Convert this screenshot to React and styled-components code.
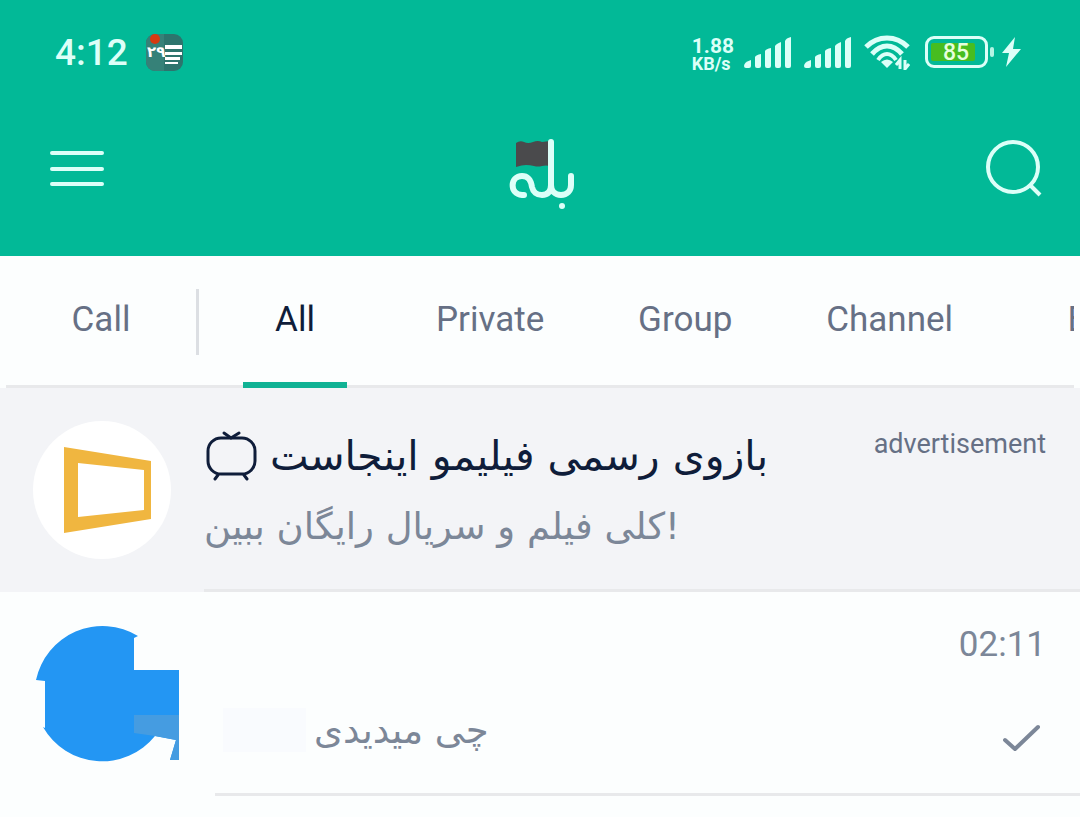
import React from 'react';
import styled, { createGlobalStyle } from 'styled-components';

const GlobalStyle = createGlobalStyle`
    * {
        box-sizing: border-box;
    }

    body {
        margin: 0;
        background: #fcfefe;
        font-family: Roboto, "DejaVu Sans", sans-serif;
    }

    button {
        margin: 0;
        padding: 0;
        border: 0;
        background: none;
        color: inherit;
        font: inherit;
        cursor: pointer;
    }

    svg {
        display: block;
        flex: none;
    }
`;

const Page = styled.div`
    min-height: 100vh;
    overflow: hidden;
`;

const Header = styled.header`
    padding-bottom: 24px;
    background: #02b997;
    color: #dcfff8;
`;

const StatusBar = styled.div`
    display: flex;
    align-items: center;
    height: 104px;
    padding: 0 59px 0 55px;
`;

const Clock = styled.time`
    margin-right: 18px;
    padding-top: 2px;
    font-size: 37px;
    font-weight: 500;
    line-height: 40px;
`;

const StatusIcons = styled.div`
    display: flex;
    align-items: center;
    gap: 12px;
    margin-left: auto;
`;

const NetSpeed = styled.div`
    margin-top: 6px;
    margin-right: -2px;
    font-size: 21px;
    font-weight: 700;
    line-height: 18px;
`;

const SpeedUnit = styled.div`
    font-size: 18px;
`;

const Battery = styled.div`
    display: flex;
    align-items: center;
    gap: 2px;
    margin: 0 -4px 0 3px;

    &::after {
        content: '';
        width: 4px;
        height: 10px;
        border-radius: 2px;
        background: #b4f5e4;
    }
`;

const BatteryCase = styled.div`
    width: 63px;
    height: 32px;
    padding: 4px 10px 4px 3px;
    border: 3px solid #dcfff8;
    border-radius: 9px;
`;

const BatteryLevel = styled.div`
    height: 18px;
    padding-left: 6px;
    border-radius: 2px;
    background: #47bd20;
    color: #e6ffdc;
    font-size: 23px;
    font-weight: 500;
    line-height: 20px;
    text-align: center;
`;

const AppBar = styled.div`
    display: flex;
    align-items: center;
    justify-content: space-between;
    height: 128px;
    padding: 0 38px 0 50px;
`;

const TabBar = styled.nav`
    display: flex;
    height: 132px;
    margin: 0 6px;
    overflow: hidden;
    box-shadow: inset 0 -3px #e8e9eb;
`;

const Tab = styled.button`
    display: flex;
    flex: none;
    justify-content: center;
    min-width: 190px;
    padding: 0 14px;
    color: ${(props) => (props.$active ? '#0f1d3a' : '#667085')};
    font-size: 35px;
    line-height: 128px;
`;

const TabLabel = styled.span`
    height: 132px;
    padding: 0 32px;
    border-bottom: 6px solid ${(props) => (props.$active ? '#10b294' : 'transparent')};
`;

const Divider = styled.span`
    flex: none;
    width: 3px;
    height: 66px;
    margin: 33px 1px 0 0;
    background: #dcdfe3;
`;

const ChatRow = styled.a`
    display: flex;
    gap: 33px;
    height: 204px;
    padding-left: 33px;
    background: ${(props) => (props.$promoted ? '#f3f4f7' : '#fcfefe')};
    color: #7c8798;
    text-decoration: none;
`;

const Avatar = styled.div`
    flex: none;
    padding-top: 33px;
`;

const Content = styled.div`
    display: flex;
    flex: 1;
    justify-content: space-between;
    min-width: 0;
    padding: 33px 34px 0 0;
    border-bottom: 3px solid #e8e9eb;
`;

const Title = styled.h2`
    display: flex;
    align-items: center;
    gap: 12px;
    height: 70px;
    margin: 0;
    color: #0f1d3a;
    font-family: "DejaVu Sans", sans-serif;
    font-size: 41px;
    font-weight: 400;
`;

const Message = styled.p`
    display: flex;
    align-items: center;
    gap: 8px;
    height: 70px;
    margin: 0;
    font-family: "DejaVu Sans", sans-serif;
    font-size: 37px;
`;

const HiddenName = styled.span`
    width: 83px;
    height: 44px;
    margin-left: 8px;
    background: #f9fbfe;
`;

const Meta = styled.div`
    display: flex;
    flex-direction: column;
    align-items: flex-end;
    gap: 56px;
`;

const Label = styled.span`
    color: #667085;
    font-size: 27px;
    line-height: 46px;
`;

const Time = styled.time`
    font-size: 35px;
    line-height: 40px;
`;

const tabs = ['All', 'Private', 'Group', 'Channel', 'Bot'];

function CalendarIcon() {
    return (
        <svg width="37" height="37" viewBox="0 0 37 37">
            <rect width="37" height="37" rx="9" fill="#2d746d" />
            <path d="M9 0h9v37H9a9 9 0 0 1-9-9V9a9 9 0 0 1 9-9Z" fill="#368178" />
            <circle cx="9" cy="5" r="5" fill="#d63a10" />
            <text x="1" y="23" fill="#fff" fontFamily="DejaVu Sans" fontSize="15" fontWeight="700">۲۹</text>
            <path d="M19 11h17v4H19zM19 18h17v3H19zM19 23h15v3H19zM19 28h13v2H19z" fill="#fff" />
        </svg>
    );
}

function SignalIcon() {
    return (
        <svg width="48" height="31" viewBox="0 0 48 31" fill="currentColor">
            <path d="M0 29q0-4 7-6v6q0 2-2 2H2q-2 0-2-2Z" />
            <path d="M11 20q1-2 6-3v12q0 2-2 2h-2q-2 0-2-2Z" />
            <path d="M21 14q1-2 6-3v18q0 2-2 2h-2q-2 0-2-2Z" />
            <path d="M31 9q1-2 6-4v24q0 2-2 2h-2q-2 0-2-2Z" />
            <path d="M41 4q1-3 6-4v29q0 2-2 2h-2q-2 0-2-2Z" />
        </svg>
    );
}

function WifiIcon() {
    return (
        <svg width="46" height="36" viewBox="0 0 46 36" fill="none" stroke="currentColor">
            <path d="M2 13Q11 4 23 4t21 9" strokeWidth="5" />
            <path d="M8 20q7-8 15-8t15 8" strokeWidth="5" />
            <path d="M14 26q4-6 9-6t9 6" strokeWidth="4" />
            <path d="m17 28 6 6 6-6q-6-5-12 0Z" fill="currentColor" stroke="none" />
            <path d="M36 35v-9l-4 5M41 26v9l4-5" strokeWidth="3" />
        </svg>
    );
}

function BoltIcon() {
    return (
        <svg width="19" height="30" viewBox="0 0 19 30" fill="currentColor">
            <path d="M13 0 0 16h7L4 30l15-18h-8Z" />
        </svg>
    );
}

function MenuIcon() {
    return (
        <svg width="54" height="40" viewBox="0 0 54 40" stroke="currentColor" strokeWidth="4" strokeLinecap="round">
            <path d="M2 5h50M2 21h50M2 36h50" />
        </svg>
    );
}

function Logo() {
    return (
        <svg width="74" height="84" viewBox="0 -12 74 84" role="img" aria-label="بله">
            <path d="M8 5q4-3 8-1t9 0 9 0l8-1v25q-4-1-8 0t-8 0-8-1-10 2Z" fill="#4a4a4c" />
            <path
                d="M16 57h-2C1 56 2 38 14 38c7 0 9 5 10 11 1 5 5 8 10 8 6 0 9-4 9-10V4v43c0 6 4 10 10 10s10-4 10-10v-9"
                fill="none"
                stroke="currentColor"
                strokeWidth="6"
                strokeLinecap="round"
                strokeLinejoin="round"
            />
            <circle cx="54" cy="68" r="3" fill="currentColor" />
        </svg>
    );
}

function SearchIcon() {
    return (
        <svg width="56" height="60" viewBox="0 0 56 60" fill="none" stroke="currentColor" strokeWidth="4">
            <circle cx="27" cy="29" r="25" />
            <path d="m45 48 9 9" />
        </svg>
    );
}

function TvIcon() {
    return (
        <svg width="54" height="50" viewBox="0 0 54 50" fill="none" stroke="currentColor" strokeWidth="3" strokeLinecap="round">
            <rect x="4" y="7" width="47" height="36" rx="13" />
            <path d="m20 2 7 5 8-5M14 44l-3 4M40 44l3 4" />
        </svg>
    );
}

function FilimoAvatar() {
    return (
        <svg width="138" height="138" viewBox="0 0 138 138">
            <circle cx="69" cy="69" r="69" fill="#fff" />
            <path d="m31 26 87 14v58l-87 14ZM45 42v54l66-7V49Z" fill="#f0b640" fillRule="evenodd" />
        </svg>
    );
}

function MaskedAvatar() {
    return (
        <svg width="149" height="138" viewBox="0 0 149 138">
            <path
                d="M3 55A68 68 0 0 1 105 11l-4 2v32h45v90h-9l6-20-21-4A68 68 0 0 1 10 102l2 1V56Z"
                fill="#2396f3"
            />
            <path d="M101 90h45v45h-9l6-20-21-4-21-3Z" fill="#459ce1" />
        </svg>
    );
}

function CheckIcon() {
    return (
        <svg width="44" height="32" viewBox="0 0 44 32" fill="none" stroke="currentColor" strokeWidth="4" strokeLinecap="round" strokeLinejoin="round">
            <path d="m3 19 10 9L36 6" />
        </svg>
    );
}

export default function App() {
    return (
        <Page>
            <GlobalStyle />
            <Header>
                <StatusBar>
                    <Clock>4:12</Clock>
                    <CalendarIcon />
                    <StatusIcons>
                        <NetSpeed>
                            1.88
                            <SpeedUnit>KB/s</SpeedUnit>
                        </NetSpeed>
                        <SignalIcon />
                        <SignalIcon />
                        <WifiIcon />
                        <Battery>
                            <BatteryCase>
                                <BatteryLevel>85</BatteryLevel>
                            </BatteryCase>
                        </Battery>
                        <BoltIcon />
                    </StatusIcons>
                </StatusBar>
                <AppBar>
                    <button type="button" aria-label="Menu"><MenuIcon /></button>
                    <Logo />
                    <button type="button" aria-label="Search"><SearchIcon /></button>
                </AppBar>
            </Header>

            <TabBar>
                <Tab type="button">
                    <TabLabel>Call</TabLabel>
                </Tab>
                <Divider />
                {tabs.map((tab) => (
                    <Tab key={tab} type="button" $active={tab === 'All'}>
                        <TabLabel $active={tab === 'All'}>{tab}</TabLabel>
                    </Tab>
                ))}
            </TabBar>

            <main>
                <ChatRow href="#filimo" $promoted>
                    <Avatar><FilimoAvatar /></Avatar>
                    <Content>
                        <div>
                            <Title>
                                <TvIcon />
                                <span dir="rtl">بازوی رسمی فیلیمو اینجاست</span>
                            </Title>
                            <Message>کلی فیلم و سریال رایگان ببین!</Message>
                        </div>
                        <Meta>
                            <Label>advertisement</Label>
                        </Meta>
                    </Content>
                </ChatRow>
                <ChatRow href="#chat">
                    <Avatar><MaskedAvatar /></Avatar>
                    <Content>
                        <div>
                            <Title />
                            <Message>
                                <HiddenName />
                                <span dir="rtl">چی میدیدی</span>
                            </Message>
                        </div>
                        <Meta>
                            <Time>02:11</Time>
                            <CheckIcon />
                        </Meta>
                    </Content>
                </ChatRow>
            </main>
        </Page>
    );
}
